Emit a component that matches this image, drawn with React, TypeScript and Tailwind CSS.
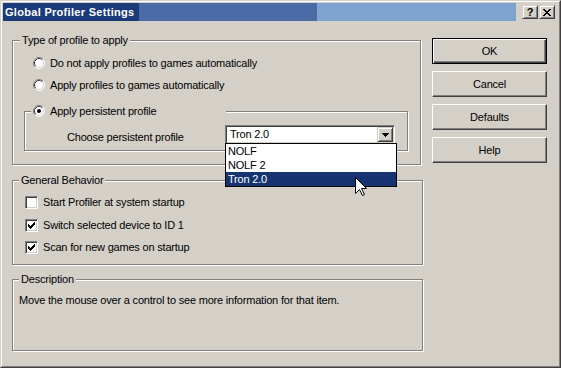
import React from 'react'

function Radio({ checked = false }: { checked?: boolean }) {
  return (
    <svg width="12" height="12" viewBox="0 0 12 12" className="shrink-0">
      <circle cx="6" cy="6" r="5" fill="#fff" />
      <path d="M2.11 9.89 A5.5 5.5 0 0 1 9.89 2.11" fill="none" stroke="#808080" />
      <path d="M9.89 2.11 A5.5 5.5 0 0 1 2.11 9.89" fill="none" stroke="#fff" />
      <path d="M2.82 9.18 A4.5 4.5 0 0 1 9.18 2.82" fill="none" stroke="#404040" />
      <path d="M9.18 2.82 A4.5 4.5 0 0 1 2.82 9.18" fill="none" stroke="#d4d0c8" />
      {checked && <circle cx="6" cy="6" r="2" fill="#000" />}
    </svg>
  )
}

function Check({ checked = false }: { checked?: boolean }) {
  const cols = [2, 3, 4, 3, 2, 1, 0]
  return (
    <div className="w-[13px] h-[13px] shrink-0 bg-white border border-t-[#808080] border-l-[#808080] border-r-white border-b-white shadow-[inset_1px_1px_0_#404040,inset_-1px_-1px_0_#d4d0c8] flex items-center justify-center">
      {checked && (
        <svg width="7" height="7" viewBox="0 0 7 7" shapeRendering="crispEdges">
          {cols.map((y, x) => (
            <rect key={x} x={x} y={y} width="1" height="3" fill="#000" />
          ))}
        </svg>
      )}
    </div>
  )
}

function Button({ label, isDefault = false }: { label: string; isDefault?: boolean }) {
  return (
    <button
      className={
        isDefault
          ? 'h-[26px] w-full bg-[#d4d0c8] border border-black shadow-[inset_1px_1px_0_#fff,inset_-1px_-1px_0_#404040,inset_-2px_-2px_0_#808080] flex items-center justify-center'
          : 'h-[26px] w-full bg-[#d4d0c8] border border-t-white border-l-white border-r-[#404040] border-b-[#404040] shadow-[inset_-1px_-1px_0_#808080] flex items-center justify-center'
      }
    >
      {label}
    </button>
  )
}

const raised =
  'bg-[#d4d0c8] border border-t-[#d4d0c8] border-l-[#d4d0c8] border-r-[#404040] border-b-[#404040] shadow-[inset_1px_1px_0_#fff,inset_-1px_-1px_0_#808080]'

export default function App() {
  return (
    <div className="w-[561px] h-[368px] bg-[#d4d0c8] border border-t-[#d4d0c8] border-l-[#d4d0c8] border-r-[#404040] border-b-[#404040] font-['Liberation_Sans',Arial,sans-serif] text-[11px] leading-[13px] tracking-[-0.2px] text-black">
      <div className="h-full border border-t-white border-l-white border-r-[#808080] border-b-[#808080] p-px flex flex-col">
        {/* title bar */}
        <div className="flex h-[18px] shrink-0">
          <div className="flex-1 flex items-center pl-[2px] text-white font-bold tracking-[0.3px] bg-[linear-gradient(90deg,#1b3a7a_0,#1b3a7a_136px,#4a6ba5_136px,#4a6ba5_314px,#7fa3cf_314px)]">
            Global Profiler Settings
          </div>
          <div className="w-[42px] flex items-center pl-[6px] gap-px">
            <div className={`w-[16px] h-[14px] ${raised} flex items-center justify-center font-bold text-[11px] leading-none tracking-normal`}>
              ?
            </div>
            <div className={`w-[16px] h-[14px] ${raised} flex items-center justify-center`}>
              <svg width="8" height="7" viewBox="0 0 8 7" shapeRendering="crispEdges">
                <path d="M0 0h2l2 2.5L6 0h2L5 3.5 8 7H6L4 4.5 2 7H0l3-3.5z" fill="#000" />
              </svg>
            </div>
          </div>
        </div>

        {/* body */}
        <div className="flex flex-1 pl-[9px]">
          <div className="flex flex-col w-[411px] mt-[19px]">
            {/* Type of profile */}
            <div className="w-[409px] h-[125px] border border-[#808080] shadow-[1px_1px_0_#fff,inset_1px_1px_0_#fff] flex flex-col">
              <span className="-mt-[7px] ml-[7px] px-[2px] self-start bg-[#d4d0c8]">Type of profile to apply</span>
              <div className="mt-[9px] h-[14px] ml-[20px] flex items-center gap-[5px]">
                <Radio />
                <span>Do not apply profiles to games automatically</span>
              </div>
              <div className="mt-[8px] h-[14px] ml-[20px] flex items-center gap-[5px]">
                <Radio />
                <span>Apply profiles to games automatically</span>
              </div>
              <div className="mt-[19px] ml-[11px] w-[384px] h-[40px] border border-[#808080] shadow-[1px_1px_0_#fff,inset_1px_1px_0_#fff] flex flex-col">
                <div className="-mt-[8px] ml-[6px] pl-[2px] w-[195px] h-[14px] flex items-center gap-[5px] bg-[#d4d0c8]">
                  <Radio checked />
                  <span>Apply persistent profile</span>
                </div>
                <div className="mt-[7px] flex items-start">
                  <span className="w-[200px] pl-[42px] mt-[6px]">Choose persistent profile</span>
                  <div className="relative w-[170px] h-[19px] bg-white border border-t-[#808080] border-l-[#808080] border-r-white border-b-white shadow-[inset_1px_1px_0_#404040,inset_-1px_-1px_0_#d4d0c8] flex items-center p-px">
                    <span className="flex-1 pl-[3px]">Tron 2.0</span>
                    <div className={`w-[16px] h-[15px] ${raised} flex items-center justify-center`}>
                      <svg width="7" height="4" viewBox="0 0 7 4" shapeRendering="crispEdges">
                        <path d="M0 0h7L3.5 4z" fill="#000" />
                      </svg>
                    </div>
                    {/* open list */}
                    <div className="absolute left-[-1px] top-[17px] w-[172px] bg-white border border-black flex flex-col z-10">
                      <div className="h-[14px] pl-[2px] flex items-center">NOLF</div>
                      <div className="h-[14px] pl-[2px] flex items-center">NOLF 2</div>
                      <div className="h-[14px] pl-[2px] flex items-center bg-[#183371] text-white">Tron 2.0</div>
                      <svg width="12" height="19" viewBox="0 0 12 19" className="absolute left-[129px] top-[33px]">
                        <path d="M0.5 0.5 L0.5 16.5 L4.5 12.5 L7.5 18.5 L9.5 17.5 L6.5 11.5 L11.5 11.5 Z" fill="#fff" stroke="#000" strokeLinejoin="miter" />
                      </svg>
                    </div>
                  </div>
                </div>
              </div>
            </div>

            {/* General Behavior */}
            <div className="mt-[15px] w-[411px] h-[85px] border border-[#808080] shadow-[1px_1px_0_#fff,inset_1px_1px_0_#fff] flex flex-col">
              <span className="-mt-[7px] ml-[6px] px-[2px] self-start bg-[#d4d0c8]">General Behavior</span>
              <div className="mt-[9px] h-[13px] ml-[12px] flex items-center gap-[5px]">
                <Check />
                <span>Start Profiler at system startup</span>
              </div>
              <div className="mt-[10px] h-[13px] ml-[12px] flex items-center gap-[5px]">
                <Check checked />
                <span>Switch selected device to ID 1</span>
              </div>
              <div className="mt-[9px] h-[13px] ml-[12px] flex items-center gap-[5px]">
                <Check checked />
                <span>Scan for new games on startup</span>
              </div>
            </div>

            {/* Description */}
            <div className="mt-[14px] w-[411px] h-[72px] border border-[#808080] shadow-[1px_1px_0_#fff,inset_1px_1px_0_#fff] flex flex-col">
              <span className="-mt-[7px] ml-[6px] px-[2px] self-start bg-[#d4d0c8]">Description</span>
              <p className="mt-[8px] ml-[6px]">Move the mouse over a control to see more information for that item.</p>
            </div>
          </div>

          {/* buttons */}
          <div className="ml-[9px] mt-[17px] w-[115px] flex flex-col gap-[7px]">
            <Button label="OK" isDefault />
            <Button label="Cancel" />
            <Button label="Defaults" />
            <Button label="Help" />
          </div>
        </div>
      </div>
    </div>
  )
}
